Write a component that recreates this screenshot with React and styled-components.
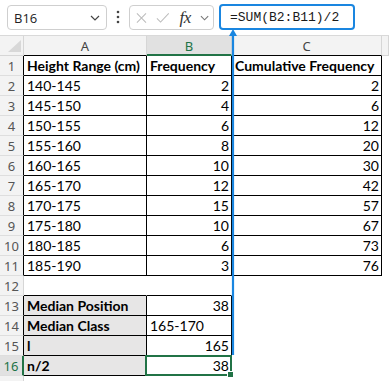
import React from 'react';
import styled, { createGlobalStyle } from 'styled-components';

const GlobalStyle = createGlobalStyle`
  body {
    margin: 0;
    background: #ffffff;
    overflow: hidden;
  }
`;

const GREEN = '#217346';
const BLUE = '#1a86e0';

const Page = styled.div`
  position: relative;
  width: 389px;
  height: 381px;
  overflow: hidden;
  background: #ffffff;
`;

const Toolbar = styled.div`
  height: 36px;
  border-bottom: 1px solid #d9d9d9;
  display: flex;
  align-items: flex-start;
  padding: 4px 0 0 7px;
  box-sizing: border-box;
`;

const NameBox = styled.div`
  width: 100px;
  height: 25px;
  margin-top: 1px;
  box-sizing: border-box;
  border: 1px solid #cfcfcf;
  border-radius: 4px;
  display: flex;
  align-items: center;
  justify-content: space-between;
  padding: 0 6px 0 6px;
  font-family: 'Open Sans', sans-serif;
  font-size: 13px;
  color: #222;
`;

const Dots = styled.div`
  width: 22px;
  height: 26px;
  display: flex;
  align-items: center;
  justify-content: center;
`;

const FxBox = styled.div`
  width: 85px;
  height: 25px;
  margin-top: 1px;
  box-sizing: border-box;
  border: 1px solid #cfcfcf;
  border-radius: 4px;
  display: flex;
  align-items: center;
  padding: 0 4px 0 6px;
  gap: 9px;
`;

const Fx = styled.span`
  font-family: 'Liberation Serif', serif;
  font-style: italic;
  font-size: 17px;
  color: #333;
  margin-left: 1px;
  letter-spacing: -0.5px;
`;

const FormulaBox = styled.div`
  margin-left: 5px;
  width: 136px;
  height: 26px;
  box-sizing: border-box;
  border: 2px solid ${BLUE};
  border-radius: 4px;
  display: flex;
  align-items: center;
  padding-left: 9px;
  font-family: 'Liberation Mono', monospace;
  font-size: 13px;
  color: #1a1a1a;
`;

const Sheet = styled.div`
  display: grid;
  grid-template-columns: 24px 123px 85px 150px 1fr;
  grid-auto-rows: 20px;
  font-family: Lato, sans-serif;
  font-size: 14px;
  color: #000;
`;

const Corner = styled.div`
  position: relative;
  background: #f3f3f3;
  border-right: 1px solid #d6d6d6;
  border-bottom: 1px solid #d6d6d6;
  box-sizing: border-box;

  &::after {
    content: '';
    position: absolute;
    right: 2px;
    bottom: 3px;
    border-left: 13px solid transparent;
    border-bottom: 12px solid #d8d8d8;
  }
`;

const ColHead = styled.div`
  box-sizing: border-box;
  background: ${p => (p.$active ? '#e1e1e1' : '#f3f3f3')};
  color: ${p => (p.$active ? GREEN : '#444')};
  border-right: 1px solid #d6d6d6;
  border-bottom: ${p =>
    p.$active ? `2px solid ${GREEN}` : `1px solid ${p.$dark ? '#000' : '#d6d6d6'}`};
  font-family: 'Noto Sans', sans-serif;
  font-size: 13px;
  display: flex;
  align-items: center;
  justify-content: center;
  padding-top: 1px;
`;

const RowHead = styled.div`
  box-sizing: border-box;
  background: ${p => (p.$active ? '#e1e1e1' : '#f3f3f3')};
  color: ${p => (p.$active ? GREEN : '#555')};
  border-bottom: 1px solid #dedede;
  border-right: ${p =>
    p.$active ? `2px solid ${GREEN}` : `1px solid ${p.$dark ? '#000' : '#d6d6d6'}`};
  font-family: 'Noto Sans', sans-serif;
  font-size: 13px;
  display: flex;
  align-items: center;
  justify-content: center;
  padding-top: 1px;
`;

const Cell = styled.div`
  position: relative;
  box-sizing: border-box;
  border-right: 1px solid ${p => (p.$r ? '#000' : 'transparent')};
  border-bottom: 1px solid ${p => (p.$b ? '#000' : 'transparent')};
  background: ${p => (p.$fill ? '#e7e6e6' : '#ffffff')};
  font-weight: ${p => (p.$bold ? 700 : 400)};
  text-align: ${p => (p.$num ? 'right' : 'left')};
  padding: 0 2px 0 3px;
  line-height: 20px;
  white-space: nowrap;
  overflow: visible;

  ${p =>
    p.$selected &&
    `
    &::after {
      content: '';
      position: absolute;
      left: -2px;
      top: -1px;
      right: -1px;
      bottom: -1px;
      border: 2px solid ${GREEN};
    }
    &::before {
      content: '';
      position: absolute;
      right: -3px;
      bottom: -3px;
      width: 5px;
      height: 5px;
      background: ${GREEN};
      border: 1px solid #fff;
      z-index: 2;
    }
  `}
`;

const Arrow = styled.svg`
  position: absolute;
  left: 228px;
  top: 29px;
`;

const Chevron = ({ color = '#555' }) => (
  <svg width="10" height="6" viewBox="0 0 10 6">
    <path d="M1 1 L5 5 L9 1" fill="none" stroke={color} strokeWidth="1.2" />
  </svg>
);

const rows = [
  ['140-145', 2, 2],
  ['145-150', 4, 6],
  ['150-155', 6, 12],
  ['155-160', 8, 20],
  ['160-165', 10, 30],
  ['165-170', 12, 42],
  ['170-175', 15, 57],
  ['175-180', 10, 67],
  ['180-185', 6, 73],
  ['185-190', 3, 76],
];

const summary = [
  ['Median Position', '38', true],
  ['Median Class', '165-170', false],
  ['l', '165', true],
  ['n/2', '38', true],
];

const App = () => {
  return (
    <Page>
      <GlobalStyle />
      <Toolbar>
        <NameBox>
          <span>B16</span>
          <Chevron color="#444" />
        </NameBox>
        <Dots>
          <svg width="4" height="14" viewBox="0 0 4 14">
            <circle cx="2" cy="2" r="1.3" fill="#444" />
            <circle cx="2" cy="7" r="1.3" fill="#444" />
            <circle cx="2" cy="12" r="1.3" fill="#444" />
          </svg>
        </Dots>
        <FxBox>
          <svg width="12" height="12" viewBox="0 0 12 12">
            <path d="M1 1 L11 11 M11 1 L1 11" stroke="#bcbcbc" strokeWidth="1.1" />
          </svg>
          <svg width="15" height="12" viewBox="0 0 15 12">
            <path d="M1 6.5 L5 10.5 L14 1" fill="none" stroke="#bcbcbc" strokeWidth="1.1" />
          </svg>
          <Fx>fx</Fx>
          <Chevron color="#777" />
        </FxBox>
        <FormulaBox>=SUM(B2:B11)/2</FormulaBox>
      </Toolbar>

      <Sheet>
        <Corner />
        <ColHead $dark>A</ColHead>
        <ColHead $active>B</ColHead>
        <ColHead $dark>C</ColHead>
        <ColHead />

        <RowHead $dark>1</RowHead>
        <Cell $r $b $bold>Height Range (cm)</Cell>
        <Cell $r $b $bold>Frequency</Cell>
        <Cell $r $b $bold>Cumulative Frequency</Cell>
        <Cell />

        {rows.map(([range, f, cf], i) => (
          <React.Fragment key={range}>
            <RowHead $dark>{i + 2}</RowHead>
            <Cell $r $b>{range}</Cell>
            <Cell $r $b $num>{f}</Cell>
            <Cell $r $b $num>{cf}</Cell>
            <Cell />
          </React.Fragment>
        ))}

        <RowHead>12</RowHead>
        <Cell $b />
        <Cell $b />
        <Cell />
        <Cell />

        {summary.map(([label, value, num], i) => (
          <React.Fragment key={label}>
            <RowHead $dark={i < 3} $active={i === 3}>{i + 13}</RowHead>
            <Cell $r $b $fill $bold>{label}</Cell>
            <Cell $r $b $num={num} $selected={i === 3}>{value}</Cell>
            <Cell />
            <Cell />
          </React.Fragment>
        ))}
        <RowHead />
      </Sheet>

      <Arrow width="10" height="328" viewBox="0 0 10 328">
        <line x1="5" y1="5" x2="5" y2="326" stroke={BLUE} strokeWidth="2.2" />
        <polygon points="5,0 1,7 9,7" fill={BLUE} />
      </Arrow>
    </Page>
  );
};

export default App;
